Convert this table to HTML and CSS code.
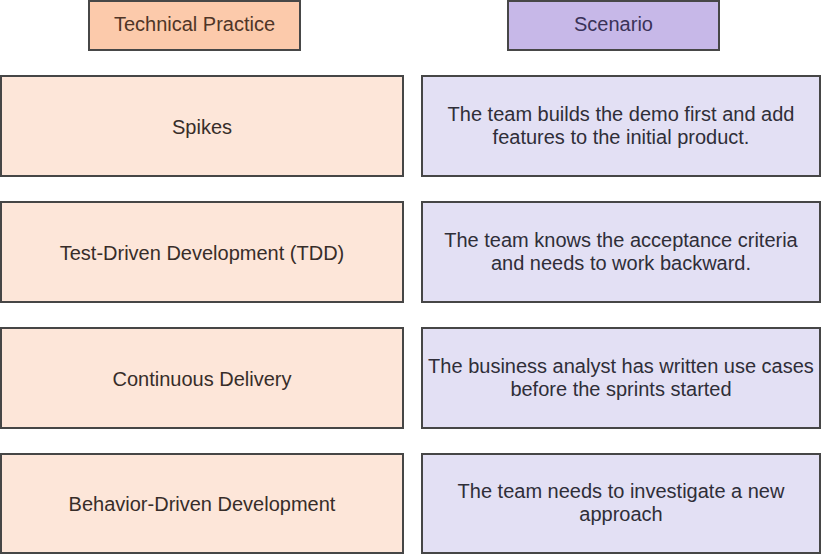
FILE: index.html
```html
<!DOCTYPE html>
<html>
<head>
<meta charset="utf-8">
<link rel="stylesheet" href="styles.css">
</head>
<body>
<div class="board">
  <div class="head-cell"><div class="head head-left">Technical Practice</div></div>
  <div class="head-cell"><div class="head head-right">Scenario</div></div>

  <div class="box practice">Spikes</div>
  <div class="box scenario">The team builds the demo first and add<br>features to the initial product.</div>

  <div class="box practice">Test-Driven Development (TDD)</div>
  <div class="box scenario">The team knows the acceptance criteria<br>and needs to work backward.</div>

  <div class="box practice">Continuous Delivery</div>
  <div class="box scenario">The business analyst has written use cases<br>before the sprints started</div>

  <div class="box practice">Behavior-Driven Development</div>
  <div class="box scenario">The team needs to investigate a new<br>approach</div>
</div>
</body>
</html>
```
FILE: styles.css
```css
html, body {
  margin: 0;
  padding: 0;
  background: #ffffff;
}
body {
  font-family: "Liberation Sans", Arial, sans-serif;
  font-size: 20px;
  color: #333333;
}
.board {
  display: grid;
  grid-template-columns: 404px 400px;
  column-gap: 17px;
  grid-template-rows: 51px 102px 102px 102px 101px;
  row-gap: 24px;
  width: 821px;
}
.head-cell {
  display: flex;
  align-items: stretch;
}
.head {
  box-sizing: border-box;
  width: 213px;
  height: 51px;
  border: 2px solid #474747;
  display: flex;
  align-items: center;
  justify-content: center;
  padding-bottom: 3px;
}
.head-left {
  margin-left: 88px;
  background: #fccaab;
  color: #4f3527;
}
.head-right {
  margin-left: 86px;
  background: #c7b8e8;
  color: #3a3258;
}
.box {
  box-sizing: border-box;
  border: 2px solid #464646;
  display: flex;
  align-items: center;
  justify-content: center;
  text-align: center;
  line-height: 23px;
}
.practice {
  background: #fde6d9;
  color: #372d29;
  padding-top: 2px;
}
.scenario {
  background: #e3e0f4;
  color: #2f2e38;
  padding-bottom: 1px;
}
```
